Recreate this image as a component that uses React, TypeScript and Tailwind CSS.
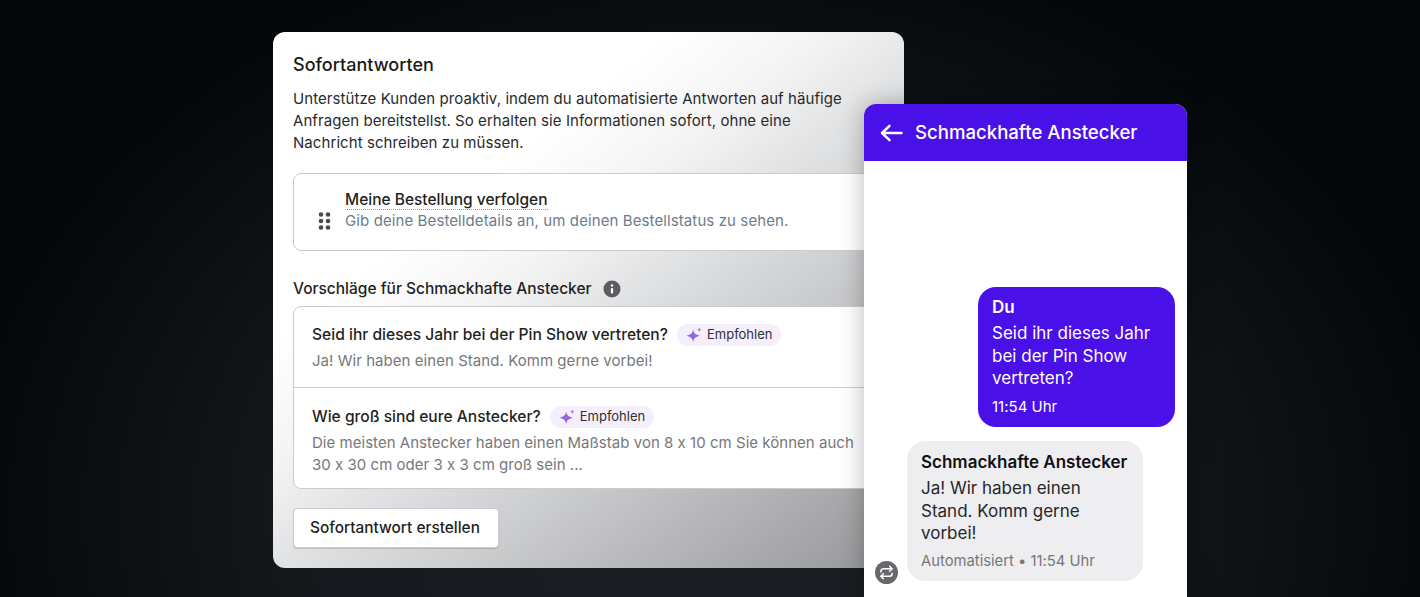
import React from 'react';
import { Repeat } from 'lucide-react';

const Sparkle = () => (
  <svg width="16" height="16" viewBox="0.5 0.5 14.5 14.5" className="shrink-0">
    <path d="M7 2.6 C7.5 6 8.9 7.5 13 8.4 C8.9 9.3 7.5 10.8 7 14.4 C6.5 10.8 5.1 9.3 1 8.4 C5.1 7.5 6.5 6 7 2.6Z" fill="#9a62e4" />
    <path d="M12.6 1 C12.8 2.2 13.3 2.7 14.5 3 C13.3 3.3 12.8 3.8 12.6 5 C12.4 3.8 11.9 3.3 10.7 3 C11.9 2.7 12.4 2.2 12.6 1Z" fill="#9a62e4" />
  </svg>
);

const Grip = () => (
  <svg width="13" height="18" viewBox="0 0 13 18" className="shrink-0">
    {[2.5, 9, 15.5].map(y => (
      <g key={y} fill="#4a4a4d">
        <circle cx="3" cy={y} r="2.3" />
        <circle cx="10" cy={y} r="2.3" />
      </g>
    ))}
  </svg>
);

const Info = () => (
  <svg width="18" height="18" viewBox="0 0 18 18" className="shrink-0">
    <circle cx="9" cy="9" r="8.5" fill="#5c5d60" />
    <circle cx="9" cy="5.4" r="1.25" fill="#fff" />
    <rect x="7.9" y="7.9" width="2.2" height="5.6" rx="0.8" fill="#fff" />
  </svg>
);

const BackArrow = () => (
  <svg width="23" height="18" viewBox="0 0 23 18" fill="none" stroke="currentColor" strokeWidth="2.5" strokeLinecap="round" strokeLinejoin="round" className="shrink-0">
    <path d="M9.5 1.8 2 9l7.5 7.2M2.5 9H21.5" />
  </svg>
);

const Pill = () => (
  <span className="flex h-[22px] w-[104px] items-center gap-[5px] rounded-full bg-[#f4effb] pl-[9px] text-[13px] tracking-normal text-[#303033]">
    <Sparkle />
    Empfohlen
  </span>
);

export default function App() {
  return (
    <div className="relative h-[597px] w-[1420px] overflow-hidden bg-[radial-gradient(ellipse_52%_95%_at_50%_85%,#1c1f23_0%,#15181c_55%,#04080b_100%)] pl-[273px] pt-[32px] font-['Inter',sans-serif] [font-feature-settings:'calt'_0]">
      {/* settings card */}
      <div className="h-[536px] w-[631px] rounded-[12px] bg-[linear-gradient(142deg,#ffffff_0%,#ffffff_30%,#f4f4f5_42%,#e2e3e4_52%,#c9cacc_68%,#959597_100%)] px-[20px] pt-[21px]">
        <h2 className="text-[18px] font-medium leading-[24px] text-[#1a1a1a]">Sofortantworten</h2>
        <p className="mt-[11px] w-[556px] text-[15px] leading-[22px] tracking-[0.07px] text-[#2a2a2c]">
          Unterstütze Kunden proaktiv, indem du automatisierte Antworten auf häufige Anfragen bereitstellst. So erhalten sie Informationen sofort, ohne eine Nachricht schreiben zu müssen.
        </p>

        <div className="mt-[19px] flex h-[78px] items-center rounded-[8px] border border-[#c9cbce] bg-white pb-[3px] pl-[24px]">
          <div className="mt-[20px]"><Grip /></div>
          <div className="ml-[14px]">
            <div className="w-fit border-b border-dotted border-[#999999] text-[15.5px] font-medium leading-[18px] text-[#1f1f21]">Meine Bestellung verfolgen</div>
            <div className="mt-[1px] text-[15px] leading-[20px] tracking-[0.1px] text-[#6b7c8e]">Gib deine Bestelldetails an, um deinen Bestellstatus zu sehen.</div>
          </div>
        </div>

        <div className="mt-[27px] flex h-[22px] items-center gap-[11px]">
          <span className="text-[15.5px] font-medium text-[#1f1f21]">Vorschläge für Schmackhafte Anstecker</span>
          <Info />
        </div>

        <div className="mt-[6px] divide-y divide-[#cfd0d2] rounded-[8px] border border-[#c9cbce] bg-white">
          <div className="h-[81px] pl-[18px] pt-[17px]">
            <div className="flex items-center gap-[9px]">
              <span className="text-[15.6px] font-medium leading-[22px] text-[#1f1f21]">Seid ihr dieses Jahr bei der Pin Show vertreten?</span>
              <Pill />
            </div>
            <p className="mt-[4px] text-[15px] leading-[22px] tracking-[0.05px] text-[#77777a]">Ja! Wir haben einen Stand. Komm gerne vorbei!</p>
          </div>
          <div className="h-[100px] pl-[18px] pt-[18px]">
            <div className="flex items-center gap-[9px]">
              <span className="text-[15.6px] font-medium leading-[22px] text-[#1f1f21]">Wie groß sind eure Anstecker?</span>
              <Pill />
            </div>
            <p className="mt-[4px] w-[550px] text-[15px] leading-[22px] tracking-[0.03px] text-[#77777a]">
              Die meisten Anstecker haben einen Maßstab von 8 x 10 cm Sie können auch 30 x 30 cm oder 3 x 3 cm groß sein ...
            </p>
          </div>
        </div>

        <button className="mt-[19px] h-[40px] w-[206px] rounded-[4px] border border-[#c9cbce] bg-white pr-[2px] text-[15.4px] font-medium text-[#1f1f21] shadow-[0_1px_1px_rgba(0,0,0,0.15)]">
          Sofortantwort erstellen
        </button>
      </div>

      {/* chat window lying over the card */}
      <div className="absolute left-[864px] top-[104px] flex h-[493px] w-[323px] flex-col rounded-t-[12px] bg-white shadow-[0_0_24px_rgba(0,0,0,0.28)]">
        <div className="flex h-[57px] items-center gap-[12px] rounded-t-[12px] bg-[#4a10e8] pl-[16px] text-white">
          <BackArrow />
          <span className="text-[18.6px] font-medium">Schmackhafte Anstecker</span>
        </div>
        <div className="flex flex-1 flex-col pt-[126px]">
          <div className="mr-[12px] h-[140px] w-[197px] self-end rounded-[18px] bg-[#4a10e8] px-[14px] pt-[10px] text-white">
            <div className="text-[17px] font-semibold leading-[21px]">Du</div>
            <p className="mt-[4px] text-[17px] leading-[22.5px]">Seid ihr dieses Jahr bei der Pin Show vertreten?</p>
            <div className="mt-[7px] text-[15px] leading-[20px]">11:54 Uhr</div>
          </div>
          <div className="relative ml-[43px] mt-[14px] h-[140px] w-[236px] rounded-[18px] bg-[#eeeef0] px-[14px] pt-[11px]">
            <div className="text-[17px] font-semibold leading-[21px] text-[#111113]">Schmackhafte Anstecker</div>
            <p className="mt-[4px] text-[17px] leading-[22.5px] text-[#25272b]">Ja! Wir haben einen Stand. Komm gerne vorbei!</p>
            <div className="mt-[6px] text-[14.8px] leading-[20px] text-[#77777a]">Automatisiert • 11:54 Uhr</div>
            <div className="absolute -left-[32px] top-[120px] flex h-[23px] w-[23px] items-center justify-center rounded-full bg-[#67686b] text-white">
              <Repeat size={15} strokeWidth={2.4} />
            </div>
          </div>
        </div>
      </div>
    </div>
  );
}
